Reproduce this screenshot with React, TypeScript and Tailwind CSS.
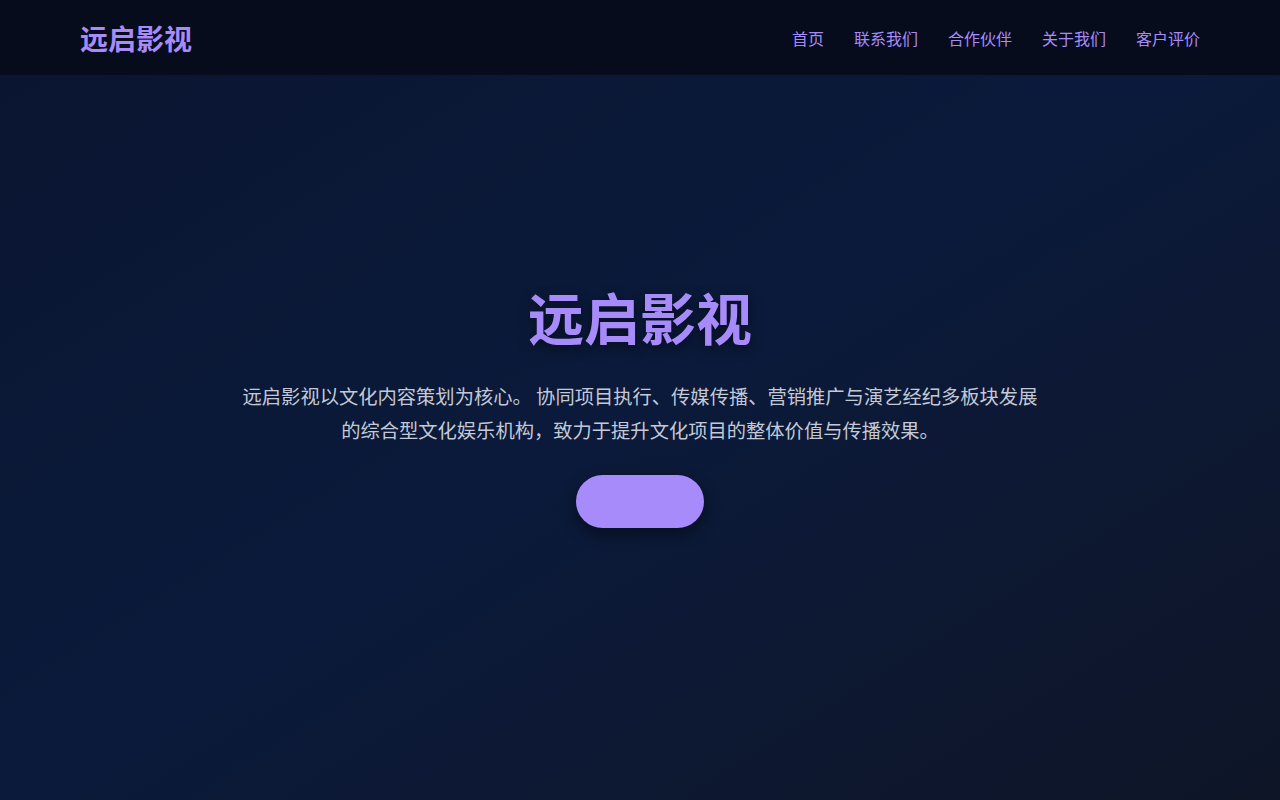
export default function App() {
  const links = ['首页', '联系我们', '合作伙伴', '关于我们', '客户评价']

  return (
    <div
      className="relative min-h-screen bg-gradient-to-br from-[#0a1530] via-[#0b1a3b] to-[#0e1527] text-white"
      style={{ fontFamily: '"Noto Sans CJK SC", "Noto Sans", sans-serif' }}
    >
      {/* Header */}
      <header className="absolute left-0 right-0 top-0 z-10 h-[75px] bg-[#050b1a]/90">
        <div className="flex h-full items-center justify-between px-20">
          <a className="text-[28px] font-bold text-[#a78bfa]">远启影视</a>
          <nav className="flex items-center gap-[30px]">
            {links.map((l) => (
              <a key={l} className="text-base text-[#a78bfa]">
                {l}
              </a>
            ))}
          </nav>
        </div>
      </header>

      {/* Hero */}
      <section className="flex min-h-screen flex-col items-center justify-center px-6 pt-2 text-center">
        <h1 className="text-[56px] font-bold leading-tight text-[#a78bfa] [text-shadow:0_4px_12px_rgba(0,0,0,0.5)]">
          远启影视
        </h1>
        <p className="mt-7 max-w-[805px] text-[19.3px] leading-[34px] text-[#c3c9d6]">
          远启影视以文化内容策划为核心。 协同项目执行、传媒传播、营销推广与演艺经纪多板块发展的综合型文化娱乐机构，致力于提升文化项目的整体价值与传播效果。
        </p>
        <button className="mt-7 h-[53px] w-[128px] rounded-full bg-[#a78bfa] shadow-[0_6px_16px_rgba(0,0,0,0.45)]"></button>
      </section>
    </div>
  )
}
